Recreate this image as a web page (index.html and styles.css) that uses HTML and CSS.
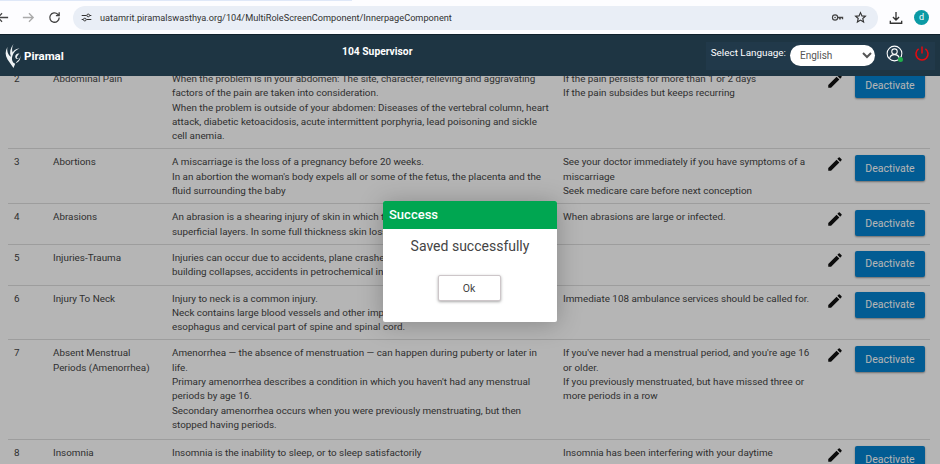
FILE: index.html
```html
<!DOCTYPE html>
<html lang="en">
<head>
    <meta charset="UTF-8">
    <meta name="viewport" content="width=device-width, initial-scale=1.0">
    <title>104 Supervisor</title>
    <link rel="stylesheet" href="styles.css">
</head>
<body>
    <div class="browser-bar">
        <div class="tab-strip"></div>
        <div class="browser-row">
            <svg class="nav-icon" viewBox="0 0 16 16"><path d="M14 8H3M7.500 3.500 3 8l4.500 4.500" fill="none" stroke="#444" stroke-width="1.400"/></svg>
            <svg class="nav-icon" viewBox="0 0 16 16"><path d="M2 8h11M8.500 3.500 13 8l-4.500 4.500" fill="none" stroke="#aaa" stroke-width="1.400"/></svg>
            <svg class="nav-icon" viewBox="0 0 16 16"><path d="M13 8a5 5 0 1 1-1.500-3.500L13 6M13 2.500V6H9.500" fill="none" stroke="#444" stroke-width="1.400"/></svg>
            <div class="url-pill">
                <svg class="site-icon" viewBox="0 0 16 16"><path d="M1 5h7M13 5h2M1 11h2M8 11h7" stroke="#333" stroke-width="1.500" fill="none"/><circle cx="10.500" cy="5" r="2" fill="none" stroke="#333" stroke-width="1.400"/><circle cx="5.500" cy="11" r="2" fill="none" stroke="#333" stroke-width="1.400"/></svg>
                <span class="url-text">uatamrit.piramalswasthya.org/104/MultiRoleScreenComponent/InnerpageComponent</span>
                <svg class="pill-icon" viewBox="0 0 16 16"><circle cx="5" cy="8" r="3.200" fill="none" stroke="#444" stroke-width="1.400"/><circle cx="5" cy="8" r="1" fill="#444"/><path d="M8 7h7v3h-1.500V9H12v1.500h-2V9H8z" fill="#444"/></svg>
                <svg class="pill-icon" viewBox="0 0 16 16"><path d="m8 2 1.800 4 4.200.4-3.200 2.800 1 4.300L8 11.200 4.200 13.500l1-4.300L2 6.400 6.200 6z" fill="none" stroke="#333" stroke-width="1.400"/></svg>
            </div>
            <svg class="download-icon" viewBox="0 0 16 16"><path d="M8 1V10M4.500 6.800 8 10.300l3.500-3.500M1.500 11v3h13v-3" fill="none" stroke="#333" stroke-width="1.500"/></svg>
            <span class="avatar">d</span>
        </div>
    </div>

    <header class="navbar">
        <div class="brand">
            <svg class="brand-mark" viewBox="0 0 20 30"><path d="M10 1C6 6 5 11 7 16 3 13 2 8 3 4 0 9 0 14 3 19l7 10 2-5c-3-1-5-5-3-10 1-3 4-6 8-8-5 1-7 3-8 5C8 8 8 5 10 1z" fill="#eef2f4"/><path d="M17 12c-3-.500-5 1.500-5 4 0 1.500 1 2.500 2 2.500l3-1.500-3 .500c-.500-1.500 1-3.500 3-5.500z" fill="#eef2f4"/><path d="M18 13c.500 3-.500 6-4 8.500l-1.500 2c4-1 6.500-5 5.500-10.500z" fill="#eef2f4"/></svg>
            <span class="brand-name">Piramal</span>
        </div>
        <div class="nav-title">104 Supervisor</div>
        <div class="nav-right">
            <span class="lang-label">Select Language:</span>
            <select class="lang-select"><option>English</option></select>
            <div class="user-icon">
                <svg viewBox="0 0 18 18"><circle cx="9" cy="9" r="7.800" fill="none" stroke="#fff" stroke-width="1.100"/><circle cx="9" cy="7" r="2.900" fill="none" stroke="#fff" stroke-width="1.100"/><path d="M3.800 14.500c.5-3 2.500-4.300 5.200-4.300s4.700 1.300 5.200 4.300" fill="none" stroke="#fff" stroke-width="1.100"/></svg>
                <span class="online-dot"></span>
            </div>
            <svg class="power-icon" viewBox="0 0 18 18"><path d="M5.200 3.800a6.800 6.800 0 1 0 7.600 0M9 1v8" fill="none" stroke="#e8090f" stroke-width="1.700"/></svg>
        </div>
    </header>

    <main class="table-area">
        <table class="topics">
            <colgroup>
                <col class="col-no"><col class="col-name"><col class="col-desc"><col class="col-rec"><col class="col-edit"><col class="col-action">
            </colgroup>
            <tbody>
                <tr>
                    <td>2</td>
                    <td>Abdominal Pain</td>
                    <td>When the problem is in your abdomen: The site, character, relieving and aggravating<br>factors of the pain are taken into consideration.<br>When the problem is outside of your abdomen: Diseases of the vertebral column, heart<br>attack, diabetic ketoacidosis, acute intermittent porphyria, lead poisoning and sickle<br>cell anemia.</td>
                    <td>If the pain persists for more than 1 or 2 days<br>If the pain subsides but keeps recurring</td>
                    <td><svg class="pencil" viewBox="0 0 24 24"><path d="M3 17.250V21h3.750L17.810 9.940l-3.750-3.750L3 17.250zM20.710 7.040a1 1 0 0 0 0-1.410l-2.340-2.340a1 1 0 0 0-1.410 0l-1.830 1.830 3.750 3.750 1.830-1.830z"/></svg></td>
                    <td><button class="btn-deactivate">Deactivate</button></td>
                </tr>
                <tr>
                    <td>3</td>
                    <td>Abortions</td>
                    <td>A miscarriage is the loss of a pregnancy before 20 weeks.<br>In an abortion the woman's body expels all or some of the fetus, the placenta and the<br>fluid surrounding the baby</td>
                    <td>See your doctor immediately if you have symptoms of a<br>miscarriage<br>Seek medicare care before next conception</td>
                    <td><svg class="pencil" viewBox="0 0 24 24"><path d="M3 17.250V21h3.750L17.810 9.940l-3.750-3.750L3 17.250zM20.710 7.040a1 1 0 0 0 0-1.410l-2.340-2.340a1 1 0 0 0-1.410 0l-1.830 1.830 3.750 3.750 1.830-1.830z"/></svg></td>
                    <td><button class="btn-deactivate">Deactivate</button></td>
                </tr>
                <tr>
                    <td>4</td>
                    <td>Abrasions</td>
                    <td>An abrasion is a shearing injury of skin in which the top layer is rubbed off<br>superficial layers. In some full thickness skin loss occurs</td>
                    <td>When abrasions are large or infected.</td>
                    <td><svg class="pencil" viewBox="0 0 24 24"><path d="M3 17.250V21h3.750L17.810 9.940l-3.750-3.750L3 17.250zM20.710 7.040a1 1 0 0 0 0-1.410l-2.340-2.340a1 1 0 0 0-1.410 0l-1.830 1.830 3.750 3.750 1.830-1.830z"/></svg></td>
                    <td><button class="btn-deactivate">Deactivate</button></td>
                </tr>
                <tr>
                    <td>5</td>
                    <td>Injuries-Trauma</td>
                    <td>Injuries can occur due to accidents, plane crashes, road traffic,<br>building collapses, accidents in petrochemical industries</td>
                    <td></td>
                    <td><svg class="pencil" viewBox="0 0 24 24"><path d="M3 17.250V21h3.750L17.810 9.940l-3.750-3.750L3 17.250zM20.710 7.040a1 1 0 0 0 0-1.410l-2.340-2.340a1 1 0 0 0-1.410 0l-1.830 1.830 3.750 3.750 1.830-1.830z"/></svg></td>
                    <td><button class="btn-deactivate">Deactivate</button></td>
                </tr>
                <tr>
                    <td>6</td>
                    <td>Injury To Neck</td>
                    <td>Injury to neck is a common injury.<br>Neck contains large blood vessels and other important structures like the<br>esophagus and cervical part of spine and spinal cord.</td>
                    <td>Immediate 108 ambulance services should be called for.</td>
                    <td><svg class="pencil" viewBox="0 0 24 24"><path d="M3 17.250V21h3.750L17.810 9.940l-3.750-3.750L3 17.250zM20.710 7.040a1 1 0 0 0 0-1.410l-2.340-2.340a1 1 0 0 0-1.410 0l-1.830 1.830 3.750 3.750 1.830-1.830z"/></svg></td>
                    <td><button class="btn-deactivate">Deactivate</button></td>
                </tr>
                <tr class="row-tall">
                    <td>7</td>
                    <td>Absent Menstrual Periods (Amenorrhea)</td>
                    <td>Amenorrhea — the absence of menstruation — can happen during puberty or later in<br>life.<br>Primary amenorrhea describes a condition in which you haven't had any menstrual<br>periods by age 16.<br>Secondary amenorrhea occurs when you were previously menstruating, but then<br>stopped having periods.</td>
                    <td>If you've never had a menstrual period, and you're age 16<br>or older.<br>If you previously menstruated, but have missed three or<br>more periods in a row</td>
                    <td><svg class="pencil" viewBox="0 0 24 24"><path d="M3 17.250V21h3.750L17.810 9.940l-3.750-3.750L3 17.250zM20.710 7.040a1 1 0 0 0 0-1.410l-2.340-2.340a1 1 0 0 0-1.410 0l-1.830 1.830 3.750 3.750 1.830-1.830z"/></svg></td>
                    <td><button class="btn-deactivate">Deactivate</button></td>
                </tr>
                <tr>
                    <td>8</td>
                    <td>Insomnia</td>
                    <td>Insomnia is the inability to sleep, or to sleep satisfactorily</td>
                    <td>Insomnia has been interfering with your daytime<br>activities or relationships</td>
                    <td><svg class="pencil" viewBox="0 0 24 24"><path d="M3 17.250V21h3.750L17.810 9.940l-3.750-3.750L3 17.250zM20.710 7.040a1 1 0 0 0 0-1.410l-2.340-2.340a1 1 0 0 0-1.410 0l-1.830 1.830 3.750 3.750 1.830-1.830z"/></svg></td>
                    <td><button class="btn-deactivate">Deactivate</button></td>
                </tr>
            </tbody>
        </table>
        <div class="backdrop">
            <div class="dialog">
                <div class="dialog-head">Success</div>
                <p class="dialog-msg">Saved successfully</p>
                <button class="btn-ok">Ok</button>
            </div>
        </div>
    </main>
</body>
</html>
```

FILE: styles.css
```css
html, body {
    margin: 0;
    height: 100%;
    overflow: hidden;
}
body {
    display: flex;
    flex-direction: column;
    font-family: Roboto, "Liberation Sans", Arial, sans-serif;
    background: #fff;
}

/* browser chrome */
.browser-bar {
    height: 34px;
    flex: none;
    background: #fdfdff;
}
.tab-strip {
    width: 352px;
    height: 1px;
    background: #dfe8f8;
}
.browser-row {
    display: flex;
    align-items: center;
    height: 33px;
    margin-left: -10px;
}
.nav-icon {
    flex: none;
    width: 15px;
    height: 15px;
    margin-left: 5px;
    margin-right: 6px;
}
.url-pill {
    flex: none;
    display: flex;
    align-items: center;
    width: 805px;
    height: 24px;
    margin-left: 5px;
    border-radius: 12px;
    background: #e9eef6;
    box-sizing: border-box;
    padding: 0 11px 0 8px;
}
.site-icon {
    width: 11px;
    height: 11px;
    margin-right: 8px;
}
.url-text {
    flex: 1;
    font-size: 9.2px;
    color: #333;
}
.pill-icon {
    width: 13px;
    height: 13px;
    margin-left: 10px;
}
.download-icon {
    flex: none;
    width: 14px;
    height: 14px;
    margin-left: 11px;
}
.avatar {
    flex: none;
    width: 15px;
    height: 15px;
    margin-left: 11px;
    border-radius: 50%;
    background: #0b9aa5;
    color: #fff;
    font-size: 9px;
    line-height: 15px;
    text-align: center;
}

/* app navbar */
.navbar {
    position: relative;
    z-index: 2;
    flex: none;
    display: flex;
    align-items: center;
    height: 42px;
    background: #1e3543;
    border-top: 1px solid #10212c;
    box-sizing: border-box;
    color: #fff;
}
.brand {
    display: flex;
    align-items: center;
    width: 342px;
    padding-left: 5px;
    box-sizing: border-box;
}
.brand-mark {
    width: 17px;
    height: 26px;
    margin-right: 2px;
}
.brand-name {
    font-size: 11.5px;
    font-weight: 700;
}
.nav-title {
    flex: 1;
    font-size: 10.3px;
    font-weight: 700;
    margin-top: -8px;
}
.nav-right {
    display: flex;
    align-items: center;
    height: 28px;
    margin-right: 5px;
    padding-right: 5px;
    background: #21394a;
}
.lang-label {
    font-size: 9.9px;
    margin-right: 4px;
    margin-left: 5px;
    margin-top: -6px;
}
.lang-select {
    width: 85px;
    height: 21px;
    border: 0;
    border-radius: 11px;
    padding-left: 6px;
    background: #fff;
    color: #555;
    font-family: inherit;
    font-size: 10px;
}
.user-icon {
    position: relative;
    width: 17px;
    height: 17px;
    margin-left: 11px;
    margin-top: -4px;
}
.user-icon svg {
    display: block;
}
.online-dot {
    position: absolute;
    right: 0;
    bottom: 0;
    width: 5px;
    height: 5px;
    border-radius: 50%;
    background: #21b04b;
}
.power-icon {
    width: 16px;
    height: 17px;
    margin-left: 11px;
    margin-top: -4px;
}

/* table behind the dialog */
.table-area {
    position: relative;
    flex: 1;
    overflow: hidden;
}
.topics {
    width: 922px;
    margin-left: 8px;
    margin-top: -10px;
    border-collapse: collapse;
    table-layout: fixed;
    font-size: 9.85px;
    line-height: 14.3px;
    color: #444;
}
.col-no { width: 39px; }
.col-name { width: 119px; }
.col-desc { width: 391px; }
.col-rec { width: 264px; }
.col-edit { width: 28px; }
.col-action { width: 81px; }
.topics td {
    vertical-align: top;
    padding: 6px 6px 5px 6px;
    border-bottom: 1px solid #ddd;
}
.topics .row-tall td {
    padding-bottom: 7px;
}
.pencil {
    display: block;
    width: 18px;
    height: 18px;
    fill: #111;
    margin-left: -1px;
}
.btn-deactivate {
    display: block;
    width: 70px;
    height: 26px;
    padding: 0;
    border: 0;
    border-radius: 2px;
    background: #0482cf;
    color: #fff;
    font-family: inherit;
    font-size: 10.5px;
    box-shadow: 0 1px 2px rgba(0,0,0,.4);
}

/* success dialog */
.backdrop {
    position: absolute;
    inset: 0;
    background: rgba(0,0,0,.29);
    display: flex;
    justify-content: center;
    align-items: flex-start;
}
.dialog {
    width: 174px;
    height: 121px;
    margin-top: 125px;
    background: #fff;
    border-radius: 2px;
    box-shadow: 0 2px 24px rgba(0,0,0,.25);
    text-align: center;
}
.dialog-head {
    height: 28px;
    padding-left: 6px;
    background: #00a651;
    color: #fff;
    font-size: 13px;
    font-weight: 500;
    line-height: 28px;
    text-align: left;
    border-radius: 2px 2px 0 0;
}
.dialog-msg {
    margin: 8px 0 20px;
    font-size: 14px;
    line-height: 18px;
    color: #444;
}
.btn-ok {
    width: 63px;
    height: 26px;
    margin-right: 2px;
    border: 1px solid #cdc6c9;
    border-radius: 2px;
    background: #fff;
    color: #444;
    font-family: inherit;
    font-size: 10.5px;
    box-shadow: 0 1px 3px rgba(0,0,0,.35);
}
```
